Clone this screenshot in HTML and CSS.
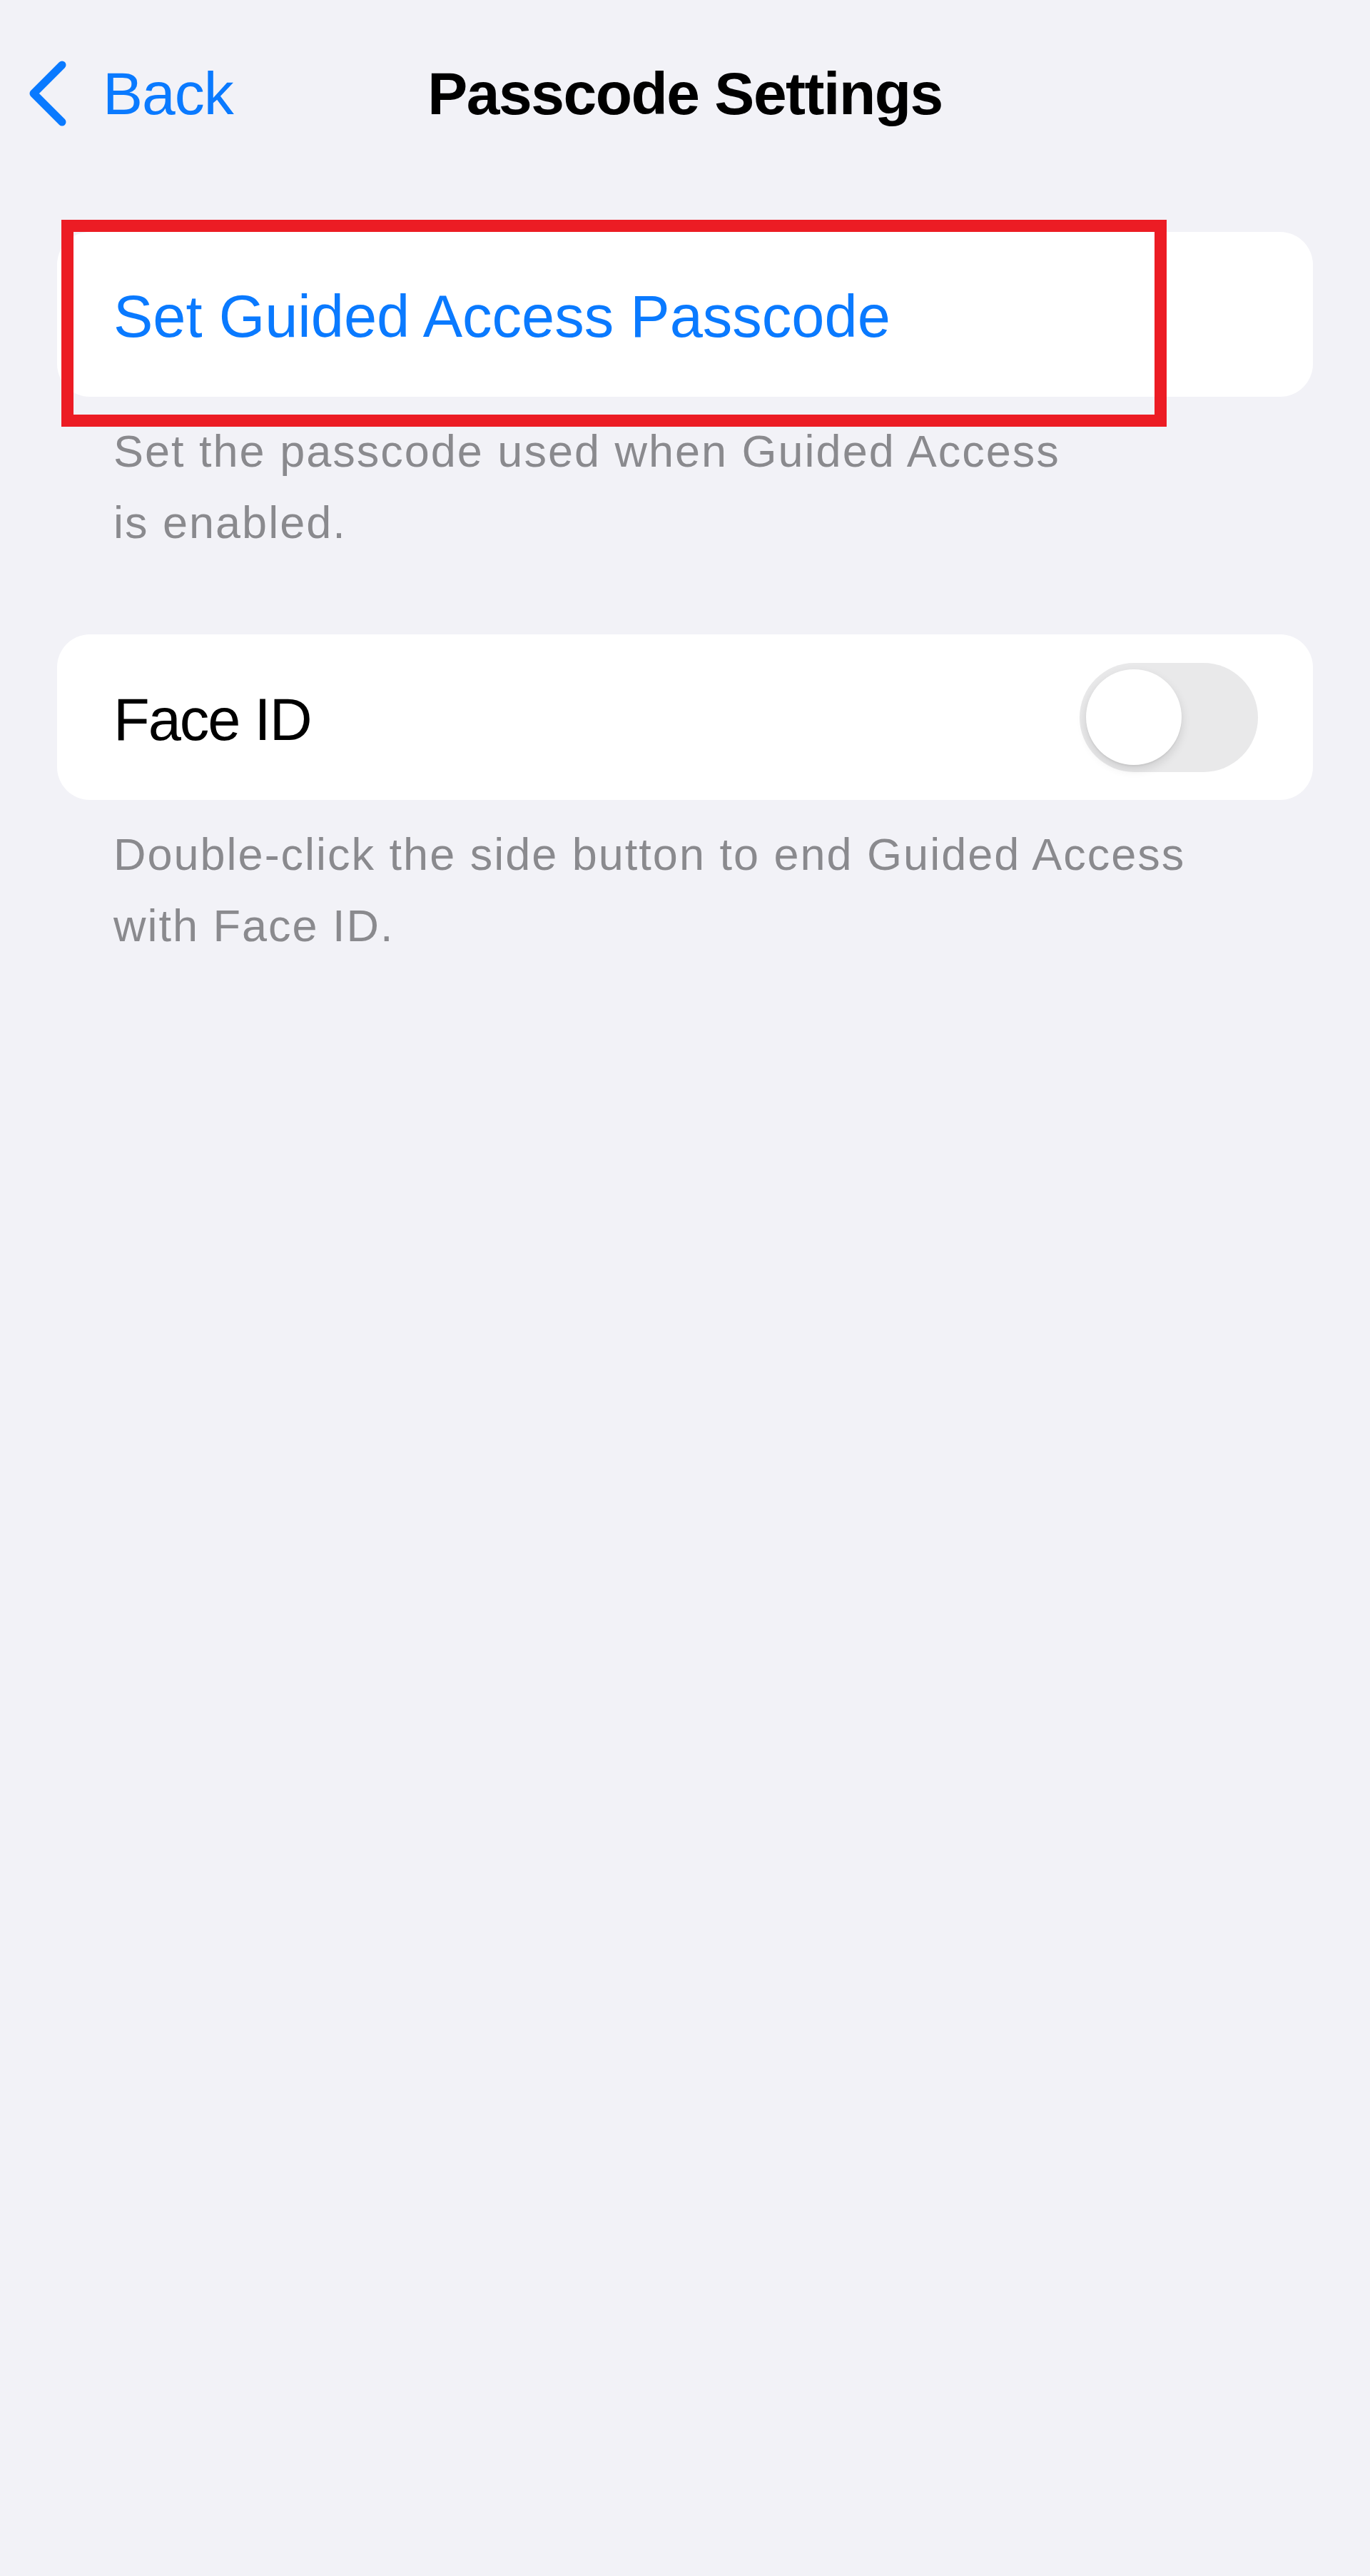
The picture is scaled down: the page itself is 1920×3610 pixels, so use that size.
FILE: index.html
```html
<!DOCTYPE html>
<html lang="en">
<head>
    <meta charset="UTF-8">
    <meta name="viewport" content="width=device-width, initial-scale=1.0">
    <title>Passcode Settings</title>
    <link rel="stylesheet" href="styles.css">
</head>
<body>

    <!-- Barra de navegação -->
    <header class="nav">
        <a class="nav-back" href="#">
            <svg class="chevron" width="54" height="92" viewBox="0 0 54 92">
                <path d="M46 6 L6 46 L46 86" fill="none" stroke="#0a7aff" stroke-width="11" stroke-linecap="round" stroke-linejoin="round"/>
            </svg>
            <span>Back</span>
        </a>
        <h1 class="nav-title">Passcode Settings</h1>
        <div></div>
    </header>

    <main class="content">
        <!-- Código -->
        <section class="group group-first">
            <div class="card highlighted">
                <div class="row">
                    <span class="row-link">Set Guided Access Passcode</span>
                </div>
                <div class="highlight-box"></div>
            </div>
            <p class="footnote">Set the passcode used when Guided Access<br>is enabled.</p>
        </section>

        <!-- Face ID -->
        <section class="group">
            <div class="card">
                <div class="row row-toggle">
                    <span class="row-label">Face ID</span>
                    <div class="switch">
                        <div class="switch-knob"></div>
                    </div>
                </div>
            </div>
            <p class="footnote">Double-click the side button to end Guided Access<br>with Face ID.</p>
        </section>
    </main>

</body>
</html>
```

FILE: styles.css
```css
html {
    background-color: #f2f2f7;
}

body {
    margin: 0;
    padding: 0;
    min-height: 3610px;
    background-color: #f2f2f7;
    font-family: "Liberation Sans", Arial, sans-serif;
    color: #000;
}

.nav {
    display: grid;
    grid-template-columns: 1fr auto 1fr;
    align-items: center;
    padding-top: 81px;
    height: 100px;
}

.nav-back {
    display: flex;
    align-items: center;
    padding-left: 41px;
    color: #0a7aff;
    text-decoration: none;
    font-size: 84px;
    line-height: 100px;
    letter-spacing: -1px;
}

.chevron {
    display: block;
    margin-right: 49px;
}

.nav-title {
    margin: 0;
    font-size: 84px;
    line-height: 100px;
    font-weight: bold;
    letter-spacing: -1.5px;
}

.content {
    padding: 0 80px;
}

.group {
    margin-top: 107px;
}

.group-first {
    margin-top: 144px;
}

.card {
    background-color: #fff;
    border-radius: 46px;
}

.highlighted {
    position: relative;
}

/* marcação vermelha por cima do cartão */
.highlight-box {
    position: absolute;
    left: 6px;
    top: -17px;
    width: 1549px;
    height: 290px;
    box-sizing: border-box;
    border: 17px solid #ec1c24;
}

.row {
    display: flex;
    align-items: center;
    height: 231px;
    padding: 0 77px 0 79px;
    box-sizing: border-box;
}

.row-toggle {
    height: 232px;
    justify-content: space-between;
}

.row-link, .row-label {
    font-size: 83px;
    line-height: 100px;
    padding-top: 7px;
}

.row-link {
    color: #0a7aff;
}

.row-label {
    letter-spacing: -2px;
}

.switch {
    display: flex;
    align-items: center;
    width: 250px;
    height: 153px;
    padding: 0 9px;
    box-sizing: border-box;
    border-radius: 77px;
    background-color: #e9e9ea;
}

.switch-knob {
    width: 134px;
    height: 134px;
    border-radius: 50%;
    background-color: #fff;
    box-shadow: 0 6px 14px rgba(0, 0, 0, 0.12), 0 2px 2px rgba(0, 0, 0, 0.05);
}

.footnote {
    margin: 0;
    padding: 26px 79px 0 79px;
    font-size: 63px;
    line-height: 100px;
    letter-spacing: 2px;
    color: #8a8a8e;
}
```
